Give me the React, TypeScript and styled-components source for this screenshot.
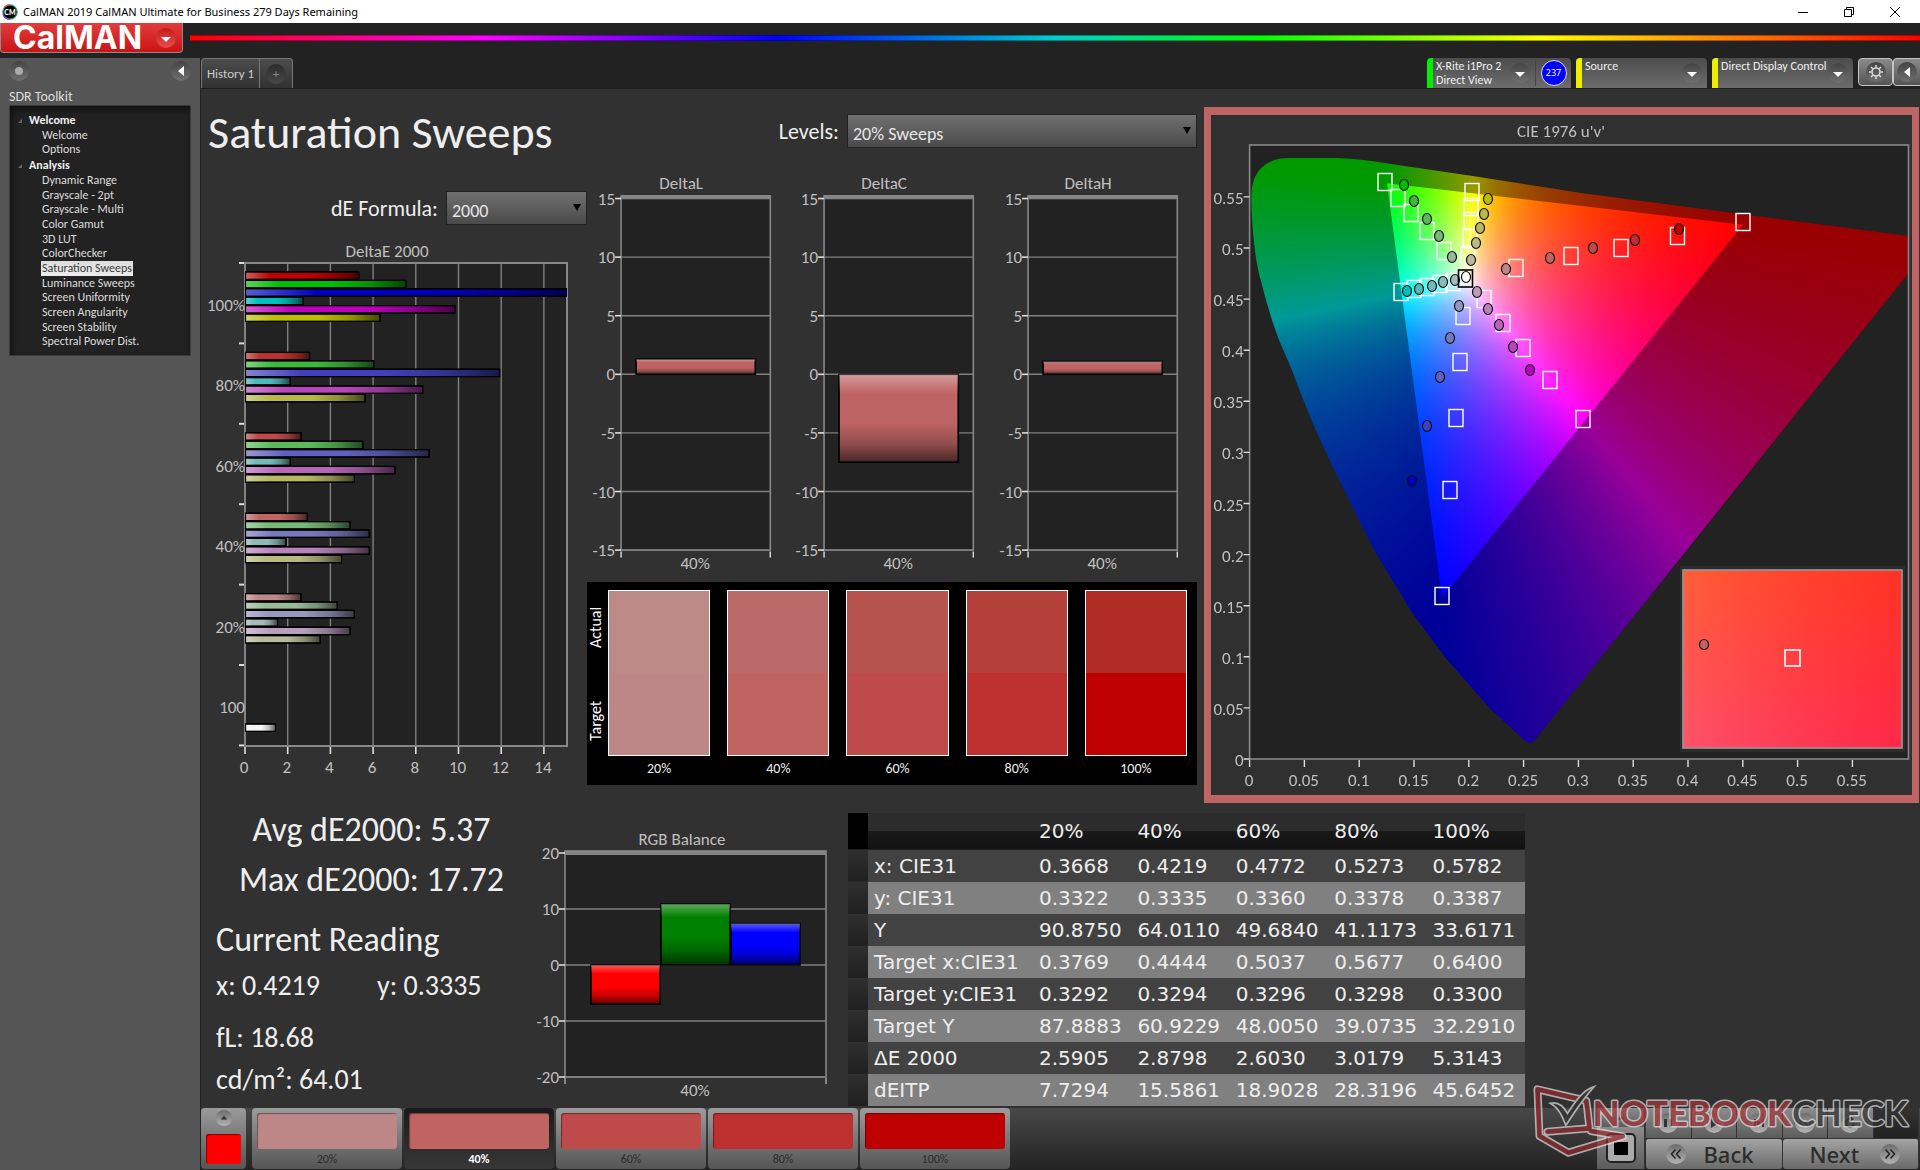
import React, { useEffect, useRef } from "react";
import styled, { createGlobalStyle, css } from "styled-components";

const ui = `Carlito, Calibri, Lato, sans-serif`;
const segoe = `"Noto Sans", "Open Sans", sans-serif`;

const GlobalStyle = createGlobalStyle`
  *, *::before, *::after { box-sizing: border-box; }
  body { margin: 0; background: #222; color: #eee; font-family: ${ui}; }
  button, select { font: inherit; color: inherit; }
  button { padding: 0; border: 0; cursor: pointer; }
  h1, h2, p, ul, figure, dl, dd { margin: 0; padding: 0; }
  ul { list-style: none; }
`;

/* ---------- window frame ---------- */

const Page = styled.div`
  display: flex;
  flex-direction: column;
  min-height: 100vh;
`;

const TitleBar = styled.header`
  display: flex;
  align-items: center;
  height: 23px;
  padding: 0 2px;
  background: #fff;
  color: #000;
  font: 11px/22px ${segoe};
`;

const WindowTitle = styled.span`
  flex: 1;
  padding-left: 5px;
`;

const WindowButton = styled.button`
  display: grid;
  place-items: center;
  width: 46px;
  height: 20px;
  background: none;
`;

const BrandBar = styled.div`
  display: flex;
  align-items: flex-start;
  height: 35px;
  background: #222;
`;

const Brand = styled.button`
  display: flex;
  align-items: center;
  justify-content: space-between;
  width: 183px;
  height: 30px;
  padding: 0 6px 0 12px;
  border: solid #8d8d8d;
  border-width: 0 1px 1px;
  border-radius: 0 0 4px 4px;
  background: linear-gradient(#e23c3c, #c81414);
  color: #fff;
  font: 700 32px/28px Inter, sans-serif;
`;

const Rainbow = styled.div`
  flex: 1;
  height: 6px;
  margin: 12px 0 0 7px;
  border: solid rgba(0, 0, 0, 0.35);
  border-width: 1px 0;
  background: linear-gradient(90deg, #f00, #f0f 17%, #00f 34%, #0cc 50%, #0f0 62%, #ff0 78%, #f00);
`;

const Shell = styled.div`
  display: grid;
  grid-template-columns: 200px minmax(0, 1fr);
  flex: 1;
`;

/* ---------- sidebar ---------- */

const Sidebar = styled.aside`
  padding: 3px 9px;
  background: #555;
`;

const SidebarTools = styled.div`
  display: flex;
  justify-content: space-between;
`;

const roundTones = {
  dark: "linear-gradient(#444, #707070)",
  light: "linear-gradient(#6c6c6c, #b4b4b4)",
  red: "linear-gradient(#c41c1c, #ee4a4a)",
  dim: "linear-gradient(#2c2c2c, #484848)",
};

const RoundButton = styled.button<{ $size?: number; $tone?: keyof typeof roundTones }>`
  display: grid;
  place-items: center;
  flex: none;
  width: ${(p) => p.$size ?? 20}px;
  height: ${(p) => p.$size ?? 20}px;
  border-radius: 50%;
  background: ${(p) => roundTones[p.$tone ?? "dark"]};
`;

const ToolkitName = styled.h2`
  margin-top: 4px;
  color: #ddd;
  font-size: 14px;
  font-weight: 400;
  line-height: 24px;
`;

const Tree = styled.nav`
  height: 251px;
  margin-top: -4px;
  padding: 6px 0 0 19px;
  border: 1px solid #3a3a3a;
  background: #222;
  box-shadow: inset 2px 4px 6px #111;
  font-size: 12px;
`;

const TreeGroup = styled.h2`
  position: relative;
  font-size: 12px;
  line-height: 16px;

  &::before {
    content: "";
    position: absolute;
    left: -11px;
    top: 7px;
    border: solid transparent;
    border-width: 0 0 4px 4px;
    border-bottom-color: #666;
  }
`;

const TreeList = styled.ul<{ $height: number }>`
  display: grid;
  grid-auto-rows: minmax(0, 1fr);
  justify-items: start;
  align-items: center;
  height: ${(p) => p.$height}px;
  padding-left: 12px;
`;

const TreeLink = styled.a<{ $active?: boolean }>`
  display: block;
  padding: 0 1px;
  line-height: 15px;
  color: #ddd;
  text-decoration: none;
  ${(p) =>
    p.$active &&
    css`
      background: linear-gradient(#ddd, #ececec);
      color: #3a3a3a;
    `}
`;

/* ---------- toolbar ---------- */

const Main = styled.main`
  position: relative;
  display: flex;
  flex-direction: column;
  min-width: 0;
  border-left: 1px solid #222;
  background: #313131;
`;

const Toolbar = styled.div`
  display: flex;
  justify-content: space-between;
  height: 31px;
  border-bottom: 1px solid #1c1c1c;
  background: #222;
`;

const Tabs = styled.div`
  display: flex;
  border: solid #777;
  border-width: 1px 1px 0;
  border-radius: 4px 4px 0 0;
  background: linear-gradient(#4c4c4c, #323232);
`;

const Tab = styled.button<{ $narrow?: boolean }>`
  display: grid;
  place-items: center;
  width: ${(p) => (p.$narrow ? 33 : 57)}px;
  background: none;
  color: ${(p) => (p.$narrow ? "#888" : "#ccc")};
  font-size: 13px;

  & + & {
    border-left: 1px solid #777;
  }
`;

const Devices = styled.div`
  display: flex;
  overflow: hidden;
`;

const Device = styled.div<{ $status: string; $width: number }>`
  display: flex;
  width: ${(p) => p.$width}px;
  margin-right: 5px;
  border-left: 6px solid ${(p) => p.$status};
  border-radius: 4px 4px 0 0;
  background: linear-gradient(#4c4c4c, #6c6c6c);
  color: #eee;
  font-size: 12px;
  line-height: 14px;
`;

const DeviceName = styled.span`
  flex: 1;
  padding: 1px 0 0 3px;
  white-space: nowrap;
`;

const DeviceMenu = styled.span`
  padding: 5px 5px 0 0;
`;

const MeterCount = styled.span`
  display: grid;
  place-items: center;
  width: 36px;
  margin: 2px 0;
  border-left: 1px solid #444;
`;

const MeterBadge = styled.span`
  width: 26px;
  height: 26px;
  border: 1px solid #dde;
  border-radius: 50%;
  background: #00f;
  color: #fff;
  font: 9px/24px ${segoe};
  text-align: center;
`;

const ToolButton = styled.button`
  display: grid;
  place-items: center;
  width: 35px;
  height: 28px;
  border: 1px solid #c4c4c4;
  border-radius: 4px;
  background: linear-gradient(#8a8a8a, #555);

  &:last-child {
    width: 27px;
    border-right: 0;
    border-radius: 4px 0 0 4px;
  }
`;

/* ---------- workspace ---------- */

const Workspace = styled.div`
  flex: 1;
`;

const UpperGrid = styled.section`
  display: grid;
  grid-template-columns: minmax(0, 386fr) minmax(0, 610fr) minmax(0, 722fr);
  padding-right: 1px;
`;

const LowerGrid = styled.section`
  display: grid;
  grid-template-columns: minmax(0, 332fr) minmax(0, 297fr) minmax(0, 695fr) minmax(0, 395fr);
  margin-top: 2px;
`;

const Column = styled.div`
  min-width: 0;
`;

const PageTitle = styled.h1`
  padding: 13px 0 0 7px;
  font-size: 46px;
  font-weight: 400;
  line-height: 60px;
  white-space: nowrap;
`;

const Field = styled.div<{ $top: number; $bottom: number }>`
  display: flex;
  align-items: center;
  justify-content: flex-end;
  gap: 8px;
  margin: ${(p) => p.$top}px 0 ${(p) => p.$bottom}px;
  font-size: 22px;
`;

const SelectBox = styled.span<{ $width: number }>`
  position: relative;
  width: ${(p) => p.$width}px;
  height: 34px;

  svg {
    position: absolute;
    right: 5px;
    top: 12px;
    pointer-events: none;
  }
`;

const Select = styled.select`
  width: 100%;
  height: 100%;
  padding: 6px 24px 0 5px;
  border: 1px solid #222;
  border-radius: 0;
  appearance: none;
  background: linear-gradient(#707070, #4a4a4a);
  color: #e6e6e6;
  font-size: 18px;
`;

const Drawing = styled.svg`
  display: block;
  width: 100%;
  height: auto;
  font-family: ${ui};
  font-size: 17px;
  fill: #c0c0c0;
`;

const DeltaRow = styled.div`
  display: grid;
  grid-template-columns: repeat(3, minmax(0, 1fr));
`;

const SwatchPanel = styled.figure`
  display: grid;
  grid-template-columns: 4px repeat(5, minmax(0, 1fr));
  column-gap: 17px;
  height: 203px;
  margin-top: 6px;
  padding: 8px 10px 0 0;
  background: #000;
`;

const SwatchSides = styled.div`
  display: grid;
  grid-template-rows: 83px 83px;
  width: 21px;
`;

const SideLabel = styled.span`
  padding-top: 8px;
  writing-mode: vertical-rl;
  transform: rotate(180deg);
  color: #fff;
  font-size: 16px;
  line-height: 18px;
  text-align: center;

  &:last-child {
    padding: 0 0 12px;
  }
`;

const Swatch = styled.div`
  color: #eee;
  font-size: 14px;
  line-height: 26px;
  text-align: center;
`;

const SwatchPair = styled.div<{ $actual: string; $target: string }>`
  height: 166px;
  border: 1px solid #fff;
  background: linear-gradient(${(p) => p.$actual} 50%, ${(p) => p.$target} 50%);
`;

const CiePanel = styled.figure`
  display: grid;
  align-self: start;
  margin: 18px 0 0 7px;
  border: solid #bf6464;
  border-width: 8px 7px;
  background: #303030;

  > * {
    grid-area: 1 / 1;
  }
`;

const GamutCanvas = styled.canvas`
  display: block;
  width: 100%;
  height: auto;
`;

/* ---------- readings ---------- */

const Readings = styled.div`
  padding-left: 15px;
  font-size: 28px;
  line-height: 42px;
  white-space: nowrap;
`;

const Summary = styled.p`
  padding-right: 6px;
  font-size: 34px;
  line-height: 50px;
  text-align: center;
`;

const ReadingTitle = styled.h2`
  margin-top: 10px;
  font-size: 34px;
  font-weight: 400;
  line-height: 50px;
`;

const Chromaticity = styled.p`
  display: grid;
  grid-template-columns: 161px auto;
  margin-bottom: 10px;
`;

const RgbBox = styled.figure`
  padding-top: 21px;
`;

const DataTable = styled.table`
  width: calc(100% - 18px);
  margin: 8px 0 0 18px;
  border-collapse: collapse;
  table-layout: fixed;
  font: 20px/32px "DejaVu Sans", sans-serif;
  text-align: left;
  white-space: nowrap;

  th, td {
    height: 32px;
    padding: 0 0 0 6px;
    font-weight: 400;
  }

  thead th {
    height: 36px;
    border-bottom: 1px solid #222;
    background: linear-gradient(#2c2c2c 50%, #191919 50%, #121212);
  }

  thead th:first-child {
    background: #000;
  }

  tbody tr {
    background: #424242;
  }

  tbody tr:nth-child(even) {
    background: #808080;
  }

  tbody td:first-child {
    background: linear-gradient(#303030, #202020);
  }
`;

const MarkerCol = styled.col`
  width: 20px;
`;

const NameCol = styled.col`
  width: 165px;
`;

/* ---------- bottom bar ---------- */

const BottomBar = styled.footer`
  display: flex;
  align-items: flex-start;
  height: 62px;
  background: linear-gradient(#484848, #232323);
`;

const PatchMenu = styled.button`
  display: grid;
  justify-items: center;
  align-content: space-between;
  width: 45px;
  height: 61px;
  margin-right: 6px;
  padding: 2px 0 5px;
  border-radius: 4px;
  background: linear-gradient(#9a9a9a, #555);
`;

const CurrentPatch = styled.span`
  width: 35px;
  height: 30px;
  border-radius: 3px;
  background: #f00;
  box-shadow: inset 1px 1px 1px #800;
`;

const PatchButton = styled.button<{ $active?: boolean }>`
  width: 150px;
  height: 61px;
  margin-right: 2px;
  padding: 5px;
  border-radius: 4px;
  background: ${(p) => (p.$active ? "linear-gradient(#1a1a1a, #383838)" : "linear-gradient(#9c9c9c, #555)")};
  color: ${(p) => (p.$active ? "#fff" : "#2c2c2c")};
  font-size: 12px;
  font-weight: ${(p) => (p.$active ? 700 : 400)};
  line-height: 20px;
`;

const PatchColor = styled.span<{ $color: string }>`
  display: block;
  height: 36px;
  border-radius: 3px;
  background: ${(p) => p.$color};
  box-shadow: inset 1px 1px 1px rgba(0, 0, 0, 0.4);
`;

const Transport = styled.div`
  display: grid;
  grid-template-columns: 49px 273px;
  margin-left: auto;
  padding-right: 1px;
`;

const StopGroup = styled.div`
  display: grid;
  grid-template-rows: 19px 42px;
  width: 48px;
`;

const Control = styled.button<{ $off?: boolean }>`
  display: grid;
  place-items: center;
  border-right: 1px solid #333;
  background: ${(p) => (p.$off ? "linear-gradient(#333, #222)" : "linear-gradient(#8c8c8c, #5c5c5c)")};
  color: #333;
`;

const ControlRow = styled.div`
  display: grid;
  grid-template-columns: repeat(6, 1fr);
  height: 30px;
`;

const StepRow = styled.div`
  display: grid;
  grid-template-columns: 1fr 1fr;
  height: 31px;
  padding-top: 1px;
`;

const StepButton = styled.button`
  display: flex;
  align-items: center;
  justify-content: space-between;
  border-right: 1px solid #333;
  border-radius: 3px;
  background: linear-gradient(#a4a4a4, #6a6a6a);
  color: #2c2c2c;
  font: 500 22px/30px ${segoe};

  &:first-child {
    padding: 0 28px 0 20px;
  }

  &:last-child {
    padding: 0 18px 0 27px;
  }
`;

const Watermark = styled.svg`
  position: absolute;
  right: 9px;
  bottom: 12px;
  width: 379px;
  height: 74px;
  opacity: 0.72;
  pointer-events: none;
`;

/* ---------- data ---------- */

const tree: { name: string; height: number; items: string[] }[] = [
  { name: "Welcome", height: 29, items: ["Welcome", "Options"] },
  {
    name: "Analysis",
    height: 176,
    items: [
      "Dynamic Range", "Grayscale - 2pt", "Grayscale - Multi", "Color Gamut", "3D LUT", "ColorChecker",
      "Saturation Sweeps", "Luminance Sweeps", "Screen Uniformity", "Screen Angularity", "Screen Stability",
      "Spectral Power Dist.",
    ],
  },
];

const levels = ["20%", "40%", "60%", "80%", "100%"];
const actual = ["#bc8b87", "#ba6b69", "#b6534d", "#b4403a", "#b02c24"];
const target = ["#be8787", "#bf6461", "#be4a4a", "#be302f", "#be0000"];

const table: [string, string[]][] = [
  ["x: CIE31", ["0.3668", "0.4219", "0.4772", "0.5273", "0.5782"]],
  ["y: CIE31", ["0.3322", "0.3335", "0.3360", "0.3378", "0.3387"]],
  ["Y", ["90.8750", "64.0110", "49.6840", "41.1173", "33.6171"]],
  ["Target x:CIE31", ["0.3769", "0.4444", "0.5037", "0.5677", "0.6400"]],
  ["Target y:CIE31", ["0.3292", "0.3294", "0.3296", "0.3298", "0.3300"]],
  ["Target Y", ["87.8883", "60.9229", "48.0050", "39.0735", "32.2910"]],
  ["ΔE 2000", ["2.5905", "2.8798", "2.6030", "3.0179", "5.3143"]],
  ["dEITP", ["7.7294", "15.5861", "18.9028", "28.3196", "45.6452"]],
];

const sweep: Record<string, string[]> = {
  "100%": ["#be0000", "#00be00", "#0000be", "#00bebe", "#be00be", "#bebe00"],
  "80%": ["#be302f", "#3cb93c", "#4040be", "#50b9b9", "#b946b9", "#b9b946"],
  "60%": ["#be4a4a", "#5ab95a", "#6060be", "#73b9b9", "#b964b9", "#b9b964"],
  "40%": ["#bf6461", "#78b978", "#7878be", "#8cb9b9", "#b982b9", "#b9b982"],
  "20%": ["#be8787", "#98ba98", "#9696be", "#a5bbbb", "#b99fbd", "#b9b99b"],
};

const deltaE: { label: string; values: number[] }[] = [
  { label: "100%", values: [5.3, 7.5, 15.4, 2.7, 9.8, 6.3] },
  { label: "80%", values: [3, 6, 11.9, 2.1, 8.3, 5.6] },
  { label: "60%", values: [2.6, 5.5, 8.6, 2.1, 7, 5.1] },
  { label: "40%", values: [2.9, 4.9, 5.8, 1.9, 5.8, 4.5] },
  { label: "20%", values: [2.6, 4.3, 5.1, 1.5, 4.9, 3.5] },
];

/* ---------- charts ---------- */

const range = (n: number) => Array.from({ length: n }, (_, i) => i);

function Shade({ id, vertical }: { id: string; vertical?: boolean }) {
  return (
    <linearGradient id={id} x2={vertical ? 0 : 1} y2={vertical ? 1 : 0}>
      <stop offset="0" stopColor="#fff" stopOpacity="0.36" />
      <stop offset="0.22" stopColor="#fff" stopOpacity="0" />
      <stop offset="0.55" stopColor="#000" stopOpacity="0" />
      <stop offset="0.78" stopColor="#000" stopOpacity="0.22" />
      <stop offset="1" stopColor="#000" stopOpacity="0.62" />
    </linearGradient>
  );
}

function DeltaEChart() {
  const left = 44, right = 366, top = 23, bottom = 506, unit = 21.35, band = 80.4;
  return (
    <Drawing viewBox="0 0 386 550" role="img" aria-label="DeltaE 2000">
      <defs>
        <Shade id="shade-h" />
        <clipPath id="plot-e"><rect x={left} y={top} width={right - left} height={bottom - top} /></clipPath>
      </defs>
      <text x="186" y="17" textAnchor="middle">DeltaE 2000</text>
      <rect x={left} y={top} width={right - left} height={bottom - top} fill="#222" stroke="#888" strokeWidth="2" />
      {range(8).map((i) => {
        const x = left + i * 2 * unit;
        return (
          <g key={i}>
            <path d={`M${x} ${top}V${bottom}`} stroke="#808080" strokeWidth="1.4" />
            <path d={`M${x} ${bottom + 1}v7`} stroke="#ddd" strokeWidth="1.6" />
            <text x={x - 1} y={bottom + 27} textAnchor="middle">{i * 2}</text>
          </g>
        );
      })}
      {range(7).map((i) => (
        <path key={i} d={`M${left - 6} ${top + i * band}h5`} stroke="#ddd" strokeWidth="2" />
      ))}
      <g clipPath="url(#plot-e)">
        {deltaE.map((group, g) =>
          group.values.map((v, i) => (
            <g key={`${g}-${i}`} strokeWidth="1.2" stroke="#000">
              <rect x={left + 0.5} y={top + g * band + 9 + i * 8.4} width={v * unit} height="7.4" fill={sweep[group.label][i]} />
              <rect x={left + 0.5} y={top + g * band + 9 + i * 8.4} width={v * unit} height="7.4" fill="url(#shade-h)" />
            </g>
          )),
        )}
        <g stroke="#000" strokeWidth="1.2">
          <rect x={left + 0.5} y="484" width="30" height="7.4" fill="#f4f4f4" />
          <rect x={left + 0.5} y="484" width="30" height="7.4" fill="url(#shade-h)" />
        </g>
      </g>
      {[...deltaE.map((g) => g.label), "100"].map((label, i) => (
        <text key={label} x={left} y={top + i * band + 48} textAnchor="end">{label}</text>
      ))}
    </Drawing>
  );
}

function DeltaChart({ title, value }: { title: string; value: number }) {
  const left = 34, right = 183, zero = 199, unit = 11.7;
  const y = zero - Math.max(value, 0) * unit;
  const bar = { x: 49, y, width: 119, height: Math.abs(value) * unit };
  return (
    <Drawing viewBox="0 0 203 400" role="img" aria-label={title}>
      <defs><Shade id="shade-v" vertical /></defs>
      <text x="94" y="14" textAnchor="middle">{title}</text>
      <rect x={left} y="21" width={right - left} height={zero + 15 * unit - 21} fill="#222" stroke="#888" strokeWidth="1.6" />
      <rect x={left} y="20" width={right - left} height="4" fill="#888" />
      {[15, 10, 5, 0, -5, -10, -15].map((t) => (
        <g key={t}>
          <path d={`M${left} ${zero - t * unit}H${right}`} stroke="#808080" strokeWidth="1.4" />
          <path d={`M${left - 6} ${zero - t * unit}h6`} stroke="#ddd" strokeWidth="1.6" />
          <text x="28" y={zero - t * unit + 6} textAnchor="end">{t}</text>
        </g>
      ))}
      <path d={`M${left} 376v6M${right} 376v6`} stroke="#ddd" strokeWidth="1.4" />
      <rect {...bar} fill="#bf6464" stroke="#000" strokeWidth="1.6" />
      <rect {...bar} fill="url(#shade-v)" />
      <text x="108" y="393" textAnchor="middle">40%</text>
    </Drawing>
  );
}

function RgbChart() {
  const left = 32, right = 293, top = 25, zero = 139, unit = 5.6;
  const bars: [number, string][] = [[-7, "#f00"], [10.9, "#008000"], [7.4, "#00f"]];
  return (
    <Drawing viewBox="0 0 297 275" role="img" aria-label="RGB Balance">
      <text x="149" y="19" textAnchor="middle">RGB Balance</text>
      <rect x={left} y={top} width={right - left} height={zero + 20 * unit - top} fill="#222" stroke="#888" strokeWidth="1.6" />
      <rect x={left} y={top} width={right - left} height="4" fill="#888" />
      {[20, 10, 0, -10, -20].map((t) => (
        <g key={t}>
          <path d={`M${left} ${zero - t * unit}H${right}`} stroke="#808080" strokeWidth="1.6" />
          <path d={`M${left - 6} ${zero - t * unit}h6`} stroke="#ddd" strokeWidth="1.6" />
          <text x="26" y={zero - t * unit + 6} textAnchor="end">{t}</text>
        </g>
      ))}
      <path d={`M${left} 252v6M${right} 252v6`} stroke="#ddd" />
      {bars.map(([v, color], i) => {
        const box = { x: 58 + i * 70, y: zero - Math.max(v, 0) * unit, width: 69, height: Math.abs(v) * unit };
        return (
          <g key={color}>
            <rect {...box} fill={color} stroke="#000" strokeWidth="1.6" />
            <rect {...box} fill="url(#shade-v)" />
          </g>
        );
      })}
      <text x="162" y="270" textAnchor="middle">40%</text>
    </Drawing>
  );
}

/* ---------- CIE 1976 u'v' ---------- */

const cie = { left: 38.6, zero: 644, scaleU: 1096, scaleV: 1022, right: 697.5, top: 30 };
const inset = { x: 472, y: 455, width: 219, height: 178 };
const locus =
  "M78 43H126C150 44 165 46.500 180 49L265 61.500 370 78 697.500 121V158L323 626Q318 630 313 625L278 592.700 255 566 234.500 543 200 496 163.500 436 147 403 119 346C108 322 100 305 92.800 286C85 266 80 252 74 239C66 222 58 198 50 166C44 145 40.500 110 40.400 82.700C40 55 56 43 78 43Z";
const gamut = "M176 68.300L532 109.700 231 482.700Z";

function chroma(u: number, v: number, gain: number): [number, number, number] {
  const x = (9 * u) / (6 * u - 16 * v + 12);
  const y = (4 * v) / (6 * u - 16 * v + 12);
  const X = x / y, Z = (1 - x - y) / y;
  const rgb = [
    3.2406 * X - 1.5372 - 0.4986 * Z,
    -0.9689 * X + 1.8758 + 0.0415 * Z,
    0.0557 * X - 0.204 + 1.057 * Z,
  ].map((c) => Math.max(c, 0));
  const peak = Math.max(...rgb) || 1;
  return rgb.map((c) => (c / peak) * 255 * gain) as [number, number, number];
}

function shadeField(
  width: number, height: number, toUv: (x: number, y: number) => [number, number], gain: number,
) {
  const layer = document.createElement("canvas");
  layer.width = width;
  layer.height = height;
  const ctx = layer.getContext("2d")!;
  const image = ctx.createImageData(width, height);
  for (let y = 0; y < height; y++) {
    for (let x = 0; x < width; x++) {
      const [u, v] = toUv(x, y);
      const [r, g, b] = chroma(u, v, gain);
      image.data.set([r, g, b, 255], (y * width + x) * 4);
    }
  }
  ctx.putImageData(image, 0, 0);
  return layer;
}

function Gamut() {
  const ref = useRef<HTMLCanvasElement>(null);
  useEffect(() => {
    const ctx = ref.current!.getContext("2d")!;
    ctx.fillStyle = "#222";
    ctx.fillRect(cie.left, cie.top, cie.right - cie.left, cie.zero - cie.top);
    const uv = (x: number, y: number): [number, number] => [
      (x - cie.left) / cie.scaleU,
      Math.max((cie.zero - y) / cie.scaleV, 0.001),
    ];
    for (const [path, gain] of [[locus, 0.6], [gamut, 1]] as [string, number][]) {
      ctx.save();
      ctx.clip(new Path2D(path));
      ctx.drawImage(shadeField(701, 680, uv, gain), 0, 0);
      ctx.restore();
    }
    ctx.fillStyle = "#2c2c2c";
    ctx.fillRect(inset.x - 3, inset.y - 4, inset.width + 6, inset.height + 8);
    const zoomUv = (x: number, y: number): [number, number] => [
      0.29 + (x / inset.width - 0.5) * 0.0473,
      0.487 - (y / inset.height - 0.5) * 0.035,
    ];
    ctx.drawImage(shadeField(inset.width, inset.height, zoomUv, 1), inset.x, inset.y);
  }, []);
  return <GamutCanvas ref={ref} width={701} height={680} />;
}

const targets: [number, number][] = [
  [174, 67], [187, 83], [200, 98], [216, 116], [233, 136],
  [261, 77], [260, 92], [260, 106], [259, 123], [257, 141],
  [190, 177], [203, 174], [216, 172], [229, 169], [242, 167],
  [305, 153], [360, 141], [410, 133], [466.5, 121], [532, 107],
  [273, 184], [292, 208], [312, 233], [339, 265], [372, 304],
  [252, 201], [249, 247], [245, 303], [239, 375], [231, 481],
];

const steps = ["100%", "80%", "60%", "40%", "20%"];
const readings: { hue: number; points: [number, number][] }[] = [
  { hue: 1, points: [[193, 70], [203, 86], [216, 104], [228, 121], [241, 142]] },
  { hue: 5, points: [[277, 84], [273, 99], [269, 113], [265, 128], [260, 145]] },
  { hue: 0, points: [[468, 114], [424, 125], [382, 133], [339, 143], [295, 154]] },
  { hue: 3, points: [[196, 176], [208, 174], [221, 171], [232, 167], [244, 165]] },
  { hue: 4, points: [[319, 255], [302, 232], [288, 210], [277, 194], [266, 177]] },
  { hue: 2, points: [[201, 366], [216, 311], [229, 262], [239, 223], [248, 191]] },
];

function CieChart() {
  const ticks = range(12).map((i) => Math.round(i * 5) / 100);
  return (
    <CiePanel>
      <Gamut />
      <Drawing viewBox="0 0 701 680" role="img" aria-label="CIE 1976 u'v' chromaticity">
        <text x="350" y="22" textAnchor="middle">CIE 1976 u'v'</text>
        <rect x={cie.left} y={cie.top} width={cie.right - cie.left} height={cie.zero - cie.top} fill="none" stroke="#888" strokeWidth="1.6" />
        {ticks.map((t) => {
          const x = cie.left + t * cie.scaleU;
          const y = cie.zero - t * cie.scaleV;
          return (
            <g key={t}>
              <path d={`M${x} ${cie.zero + 1}v7M${cie.left - 6} ${y}h6`} stroke="#ddd" strokeWidth="1.4" />
              <text x={x - 0.5} y={cie.zero + 27} textAnchor="middle">{t}</text>
              <text x={cie.left - 6} y={y + 7} textAnchor="end">{t}</text>
            </g>
          );
        })}
        <g fill="none" stroke="#fff" strokeWidth="1.4">
          {targets.map(([x, y], i) => (
            <rect key={i} x={x - 7} y={y - 8.5} width="14" height="17" />
          ))}
        </g>
        <g stroke="#111" strokeWidth="1.2">
          {readings.map(({ hue, points }) =>
            points.map(([x, y], i) => (
              <ellipse key={`${hue}-${i}`} cx={x} cy={y} rx="4.5" ry="5.5" fill={sweep[steps[i]][hue]} />
            )),
          )}
          <rect x="247.500" y="155" width="14" height="17" fill="none" stroke="#000" strokeWidth="1.6" />
          <ellipse cx="255" cy="162" rx="4.5" ry="5.5" fill="#fff" />
        </g>
        <rect {...inset} fill="none" stroke="#999" strokeWidth="1.6" />
        <ellipse cx="493" cy="529.500" rx="4.500" ry="5" fill="#bf6461" stroke="#111" strokeWidth="1.2" />
        <rect x="574" y="535" width="15" height="16" fill="none" stroke="#fff" strokeWidth="1.6" />
      </Drawing>
    </CiePanel>
  );
}

/* ---------- icons ---------- */

const AppIcon = () => (
  <svg width="16" height="16" viewBox="0 0 16 16">
    <circle cx="8" cy="8" r="7.2" fill="#000" stroke="#3a7" strokeWidth="1.2" />
    <path d="M2 4A7.200 7.200 0 0 1 8 .800" stroke="#d44" strokeWidth="1.2" fill="none" />
    <path d="M8 15.200A7.200 7.200 0 0 1 1 10" stroke="#64d" strokeWidth="1.2" fill="none" />
    <text x="8" y="10.500" textAnchor="middle" fill="#fff" fontFamily="Lato, sans-serif" fontWeight="900" fontSize="7">CM</text>
  </svg>
);

const carets = { down: "M0 4h10L5 9z", left: "M8 0v10L2 5z", up: "M1 7h8L5 2z", select: "M1 1h8L5 8z" };

const Caret = ({ dir = "down", color = "#fff", size = 10 }: { dir?: keyof typeof carets; color?: string; size?: number }) => (
  <svg width={size} height={size} viewBox="0 0 10 10" fill={color}>
    <path d={carets[dir]} />
  </svg>
);

const Gear = () => (
  <svg width="14" height="14" viewBox="0 0 14 14" fill="none" stroke="#d8d8d8">
    <circle cx="7" cy="7" r="4" strokeWidth="1.6" />
    <path d="M7 0v2.500M7 11.500V14M0 7h2.500M11.500 7H14M2 2l2 2M10 10l2 2M12 2l-2 2M4 10l-2 2" strokeWidth="1.600" />
  </svg>
);

const Chevrons = ({ flip }: { flip?: boolean }) => (
  <svg width="12" height="12" viewBox="0 0 12 12" fill="none" stroke="#222" strokeWidth="1.5">
    <path d={flip ? "M1.500 1.500l4 4.500-4 4.500M6.500 1.500l4 4.500-4 4.500" : "M5.500 1.500l-4 4.500 4 4.500M10.500 1.500l-4 4.500 4 4.500"} />
  </svg>
);

const controls: [string, string][] = [
  ["Pause", "M2 2h3v8H2zM7 2h3v8H7z"],
  ["Play", "M3 1l8 5-8 5z"],
  ["Series", "M1 2h2v8H1zM4 3l4 3-4 3zM9 2h2v8H9z"],
  ["Continuous", "M6 6C3 2 0 4 1 6s3 3 5 0 5-3 5 0-3 3-5 0z"],
  ["Refresh", "M6 1a5 5 0 1 0 5 5H9a3 3 0 1 1-3-3v2l4-3-4-3z"],
];

function NotebookCheck() {
  const frame = "M262 150L258 122 112 88 118 228 205 278 368 229 272 213M262 150L268 205 142 215";
  return (
    <Watermark viewBox="96 72 1136 222" role="img" aria-label="Notebookcheck">
      <g fill="none" strokeLinejoin="round" strokeLinecap="round">
        <path d={frame} stroke="#ddd" strokeWidth="24" />
        <path d={frame} stroke="#952a2e" strokeWidth="14" />
      </g>
      <path d="M150 130C172 124 190 138 202 160C225 125 248 90 282 80C250 115 222 158 197 196C186 168 176 144 150 130Z" fill="#333" stroke="#ddd" strokeWidth="5" />
      <g fontFamily="Lato, sans-serif" fontSize="104" strokeWidth="9" paintOrder="stroke" stroke="#ddd" strokeLinejoin="round">
        <text x="278" y="198" fontWeight="900" fill="#a43438">NOTEBOOK</text>
        <text x="876" y="198" fontWeight="700" fill="#333">CHECK</text>
      </g>
    </Watermark>
  );
}

/* ---------- page ---------- */

function Picker({ id, value, width }: { id: string; value: string; width: number }) {
  return (
    <SelectBox $width={width}>
      <Select id={id} defaultValue={value}>
        <option>{value}</option>
      </Select>
      <Caret dir="select" color="#000" />
    </SelectBox>
  );
}

export default function App() {
  return (
    <Page>
      <GlobalStyle />
      <TitleBar>
        <AppIcon />
        <WindowTitle>CalMAN 2019 CalMAN Ultimate for Business 279 Days Remaining</WindowTitle>
        <WindowButton aria-label="Minimize">
          <svg width="10" height="10" stroke="#000"><path d="M0 5.500h10" /></svg>
        </WindowButton>
        <WindowButton aria-label="Restore">
          <svg width="10" height="10" stroke="#000" fill="none"><path d="M.500 2.500h7v7h-7zM2.500 2.500v-2h7v7h-2" /></svg>
        </WindowButton>
        <WindowButton aria-label="Close">
          <svg width="10" height="10" stroke="#000"><path d="M0 0l10 10M10 0L0 10" /></svg>
        </WindowButton>
      </TitleBar>

      <BrandBar>
        <Brand>
          CalMAN
          <RoundButton as="span" $tone="red"><Caret /></RoundButton>
        </Brand>
        <Rainbow />
      </BrandBar>

      <Shell>
        <Sidebar>
          <SidebarTools>
            <RoundButton aria-label="Status">
              <svg width="8" height="8"><circle cx="4" cy="4" r="4" fill="#aaa" /></svg>
            </RoundButton>
            <RoundButton aria-label="Collapse sidebar"><Caret dir="left" /></RoundButton>
          </SidebarTools>
          <ToolkitName>SDR Toolkit</ToolkitName>
          <Tree>
            {tree.map((group) => (
              <div key={group.name}>
                <TreeGroup>{group.name}</TreeGroup>
                <TreeList $height={group.height}>
                  {group.items.map((item) => (
                    <li key={item}>
                      <TreeLink href="#" $active={item === "Saturation Sweeps"}>{item}</TreeLink>
                    </li>
                  ))}
                </TreeList>
              </div>
            ))}
          </Tree>
        </Sidebar>

        <Main>
          <Toolbar>
            <Tabs>
              <Tab>History 1</Tab>
              <Tab $narrow aria-label="Add history">
                <RoundButton as="span" $tone="dim">+</RoundButton>
              </Tab>
            </Tabs>
            <Devices>
              <Device $status="#0e0" $width={144}>
                <DeviceName>X-Rite i1Pro 2<br />Direct View</DeviceName>
                <DeviceMenu><RoundButton aria-label="Meter menu"><Caret /></RoundButton></DeviceMenu>
                <MeterCount><MeterBadge>237</MeterBadge></MeterCount>
              </Device>
              <Device $status="#ee0" $width={131}>
                <DeviceName>Source</DeviceName>
                <DeviceMenu><RoundButton aria-label="Source menu"><Caret /></RoundButton></DeviceMenu>
              </Device>
              <Device $status="#ee0" $width={141}>
                <DeviceName>Direct Display Control</DeviceName>
                <DeviceMenu><RoundButton aria-label="Display menu"><Caret /></RoundButton></DeviceMenu>
              </Device>
              <ToolButton aria-label="Settings"><RoundButton as="span"><Gear /></RoundButton></ToolButton>
              <ToolButton aria-label="Collapse"><RoundButton as="span"><Caret dir="left" /></RoundButton></ToolButton>
            </Devices>
          </Toolbar>

          <Workspace>
            <UpperGrid>
              <Column>
                <PageTitle>Saturation Sweeps</PageTitle>
                <Field $top={29} $bottom={15}>
                  <label htmlFor="formula">dE Formula:</label>
                  <Picker id="formula" value="2000" width={141} />
                </Field>
                <DeltaEChart />
              </Column>

              <Column>
                <Field $top={25} $bottom={27}>
                  <label htmlFor="levels">Levels:</label>
                  <Picker id="levels" value="20% Sweeps" width={350} />
                </Field>
                <DeltaRow>
                  <DeltaChart title="DeltaL" value={1.3} />
                  <DeltaChart title="DeltaC" value={-7.5} />
                  <DeltaChart title="DeltaH" value={1.1} />
                </DeltaRow>
                <SwatchPanel>
                  <SwatchSides>
                    <SideLabel>Actual</SideLabel>
                    <SideLabel>Target</SideLabel>
                  </SwatchSides>
                  {levels.map((level, i) => (
                    <Swatch key={level}>
                      <SwatchPair $actual={actual[i]} $target={target[i]} />
                      {level}
                    </Swatch>
                  ))}
                </SwatchPanel>
              </Column>

              <CieChart />
            </UpperGrid>

            <LowerGrid>
              <Readings>
                <Summary>Avg dE2000: 5.37</Summary>
                <Summary>Max dE2000: 17.72</Summary>
                <ReadingTitle>Current Reading</ReadingTitle>
                <Chromaticity>
                  <span>x: 0.4219</span>
                  <span>y: 0.3335</span>
                </Chromaticity>
                <p>fL: 18.68</p>
                <p>cd/m²: 64.01</p>
              </Readings>

              <RgbBox><RgbChart /></RgbBox>

              <DataTable>
                <colgroup>
                  <MarkerCol />
                  <NameCol />
                  {levels.map((level) => <col key={level} />)}
                </colgroup>
                <thead>
                  <tr>
                    <th />
                    <th />
                    {levels.map((level) => <th key={level} scope="col">{level}</th>)}
                  </tr>
                </thead>
                <tbody>
                  {table.map(([name, values]) => (
                    <tr key={name}>
                      <td />
                      <th scope="row">{name}</th>
                      {values.map((v, i) => <td key={i}>{v}</td>)}
                    </tr>
                  ))}
                </tbody>
              </DataTable>
            </LowerGrid>
          </Workspace>

          <BottomBar>
            <PatchMenu aria-label="Patch menu">
              <RoundButton as="span" $size={16} $tone="light"><Caret dir="up" color="#333" size={8} /></RoundButton>
              <CurrentPatch />
            </PatchMenu>
            {levels.map((level, i) => (
              <PatchButton key={level} $active={level === "40%"}>
                <PatchColor $color={target[i]} />
                {level}
              </PatchButton>
            ))}
            <Transport>
              <StopGroup>
                <Control aria-label="Expand"><Caret dir="up" color="#333" size={8} /></Control>
                <Control aria-label="Stop">
                  <svg width="30" height="30" viewBox="0 0 30 30">
                    <rect x="1" y="1" width="28" height="28" rx="4" fill="#aaa" stroke="#222" strokeWidth="2" />
                    <rect x="8" y="9" width="14" height="13" />
                  </svg>
                </Control>
              </StopGroup>
              <div>
                <ControlRow>
                  {controls.map(([name, d]) => (
                    <Control key={name} aria-label={name}>
                      <RoundButton as="span" $tone="light">
                        <svg width="12" height="12" viewBox="0 0 12 12" fill={name === "Continuous" ? "none" : "#333"} stroke={name === "Continuous" ? "#333" : "none"}>
                          <path d={d} />
                        </svg>
                      </RoundButton>
                    </Control>
                  ))}
                  <Control $off aria-label="Unavailable" />
                </ControlRow>
                <StepRow>
                  <StepButton>
                    <RoundButton as="span" $tone="light"><Chevrons /></RoundButton>
                    Back
                  </StepButton>
                  <StepButton>
                    Next
                    <RoundButton as="span" $tone="light"><Chevrons flip /></RoundButton>
                  </StepButton>
                </StepRow>
              </div>
            </Transport>
          </BottomBar>
          <NotebookCheck />
        </Main>
      </Shell>
    </Page>
  );
}
